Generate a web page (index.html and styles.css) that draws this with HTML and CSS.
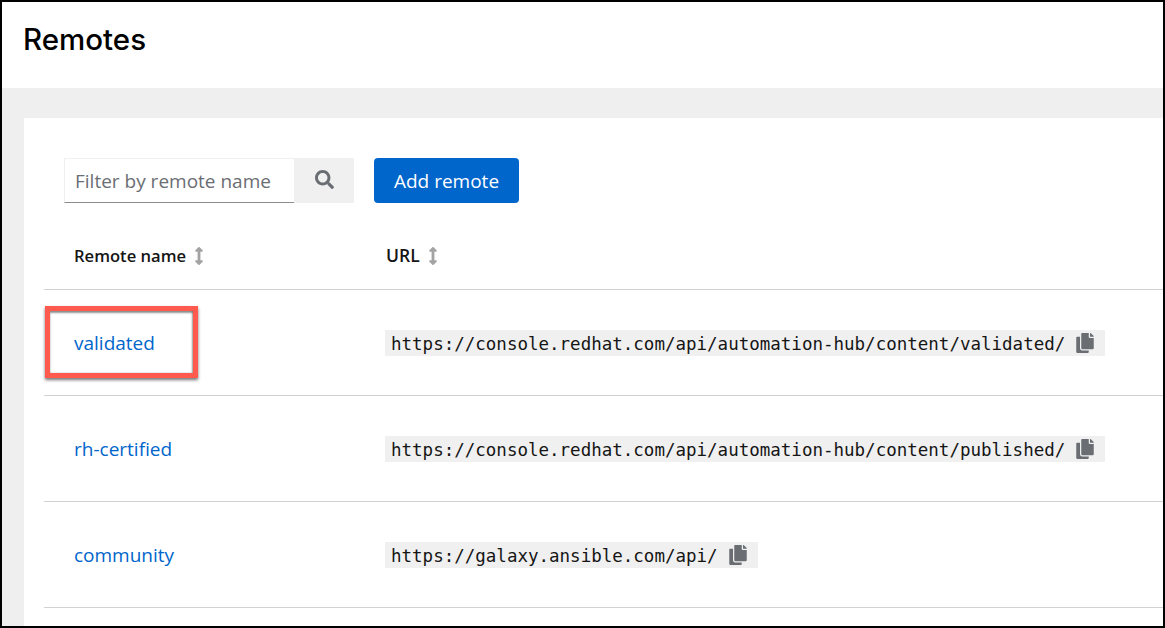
FILE: index.html
```html
<!DOCTYPE html>
<html lang="en">
<head>
    <meta charset="utf-8">
    <title>Remotes</title>
    <link rel="stylesheet" href="styles.css">
</head>
<body>
<div class="frame">
    <header class="page-header">
        <h1>Remotes</h1>
    </header>

    <main class="page-main">
        <section class="card">
            <div class="toolbar">
                <div class="filter">
                    <input class="filter-input" type="text" placeholder="Filter by remote name">
                    <button class="filter-btn" type="button" aria-label="Search">
                        <svg class="icon-search" viewBox="0 0 512 512"><path d="M505 442.7L405.3 343c-4.5-4.5-10.6-7-17-7H372c27.6-35.3 44-79.7 44-128C416 93.1 322.9 0 208 0S0 93.1 0 208s93.1 208 208 208c48.3 0 92.7-16.4 128-44v16.3c0 6.4 2.5 12.5 7 17l99.7 99.7c9.4 9.4 24.6 9.4 33.9 0l28.3-28.3c9.4-9.4 9.4-24.6.1-34zM208 336c-70.7 0-128-57.2-128-128 0-70.7 57.2-128 128-128 70.7 0 128 57.2 128 128 0 70.7-57.2 128-128 128z"/></svg>
                    </button>
                </div>
                <button class="add-btn" type="button">Add remote</button>
            </div>

            <table class="remotes">
                <thead>
                    <tr>
                        <th class="col-name">Remote name
                            <svg class="icon-sort" viewBox="0 0 256 512"><path d="M214.059 377.941H168V134.059h46.059c21.382 0 32.09-25.851 16.971-40.971L144.971 7.029c-9.373-9.373-24.569-9.373-33.941 0L24.971 93.088c-15.119 15.119-4.411 40.971 16.971 40.971H88v243.882H41.941c-21.382 0-32.09 25.851-16.971 40.971l86.059 86.059c9.373 9.373 24.569 9.373 33.941 0l86.059-86.059c15.12-15.119 4.412-40.971-16.97-40.971z"/></svg>
                        </th>
                        <th class="col-url">URL
                            <svg class="icon-sort" viewBox="0 0 256 512"><path d="M214.059 377.941H168V134.059h46.059c21.382 0 32.09-25.851 16.971-40.971L144.971 7.029c-9.373-9.373-24.569-9.373-33.941 0L24.971 93.088c-15.119 15.119-4.411 40.971 16.971 40.971H88v243.882H41.941c-21.382 0-32.09 25.851-16.971 40.971l86.059 86.059c9.373 9.373 24.569 9.373 33.941 0l86.059-86.059c15.12-15.119 4.412-40.971-16.97-40.971z"/></svg>
                        </th>
                    </tr>
                </thead>
                <tbody>
                    <tr>
                        <td class="col-name highlighted">
                            <a href="#">validated</a>
                            <span class="callout"></span>
                        </td>
                        <td class="col-url">
                            <span class="url-chip">https://console.redhat.com/api/automation-hub/content/validated/
                                <svg class="icon-copy" viewBox="0 0 448 512"><path d="M320 448v40c0 13.255-10.745 24-24 24H24c-13.255 0-24-10.745-24-24V120c0-13.255 10.745-24 24-24h72v296c0 30.879 25.121 56 56 56h168zm0-344V0H152c-13.255 0-24 10.745-24 24v368c0 13.255 10.745 24 24 24h272c13.255 0 24-10.745 24-24V128H344c-13.2 0-24-10.8-24-24zm120.971-31.029L375.029 7.029A24 24 0 0 0 358.059 0H352v96h96v-6.059a24 24 0 0 0-7.029-16.97z"/></svg>
                            </span>
                        </td>
                    </tr>
                    <tr>
                        <td class="col-name"><a href="#">rh-certified</a></td>
                        <td class="col-url">
                            <span class="url-chip">https://console.redhat.com/api/automation-hub/content/published/
                                <svg class="icon-copy" viewBox="0 0 448 512"><path d="M320 448v40c0 13.255-10.745 24-24 24H24c-13.255 0-24-10.745-24-24V120c0-13.255 10.745-24 24-24h72v296c0 30.879 25.121 56 56 56h168zm0-344V0H152c-13.255 0-24 10.745-24 24v368c0 13.255 10.745 24 24 24h272c13.255 0 24-10.745 24-24V128H344c-13.2 0-24-10.8-24-24zm120.971-31.029L375.029 7.029A24 24 0 0 0 358.059 0H352v96h96v-6.059a24 24 0 0 0-7.029-16.97z"/></svg>
                            </span>
                        </td>
                    </tr>
                    <tr>
                        <td class="col-name"><a href="#">community</a></td>
                        <td class="col-url">
                            <span class="url-chip">https://galaxy.ansible.com/api/
                                <svg class="icon-copy" viewBox="0 0 448 512"><path d="M320 448v40c0 13.255-10.745 24-24 24H24c-13.255 0-24-10.745-24-24V120c0-13.255 10.745-24 24-24h72v296c0 30.879 25.121 56 56 56h168zm0-344V0H152c-13.255 0-24 10.745-24 24v368c0 13.255 10.745 24 24 24h272c13.255 0 24-10.745 24-24V128H344c-13.2 0-24-10.8-24-24zm120.971-31.029L375.029 7.029A24 24 0 0 0 358.059 0H352v96h96v-6.059a24 24 0 0 0-7.029-16.97z"/></svg>
                            </span>
                        </td>
                    </tr>
                </tbody>
            </table>
        </section>
    </main>
</div>
</body>
</html>
```

FILE: styles.css
```css
* {
    box-sizing: border-box;
}

body {
    margin: 0;
    font-family: 'Open Sans', sans-serif;
    color: #151515;
    background: #fff;
}

.frame {
    width: 1165px;
    height: 628px;
    border: 2px solid #000;
    overflow: hidden;
    display: flex;
    flex-direction: column;
}

.page-header {
    height: 86px;
    flex: none;
    padding: 18px 0 0 21px;
    background: #fff;
}

.page-header h1 {
    margin: 0;
    font-family: 'Inter', sans-serif;
    font-size: 29.5px;
    line-height: 38px;
    font-weight: 500;
    color: #000;
}

.page-main {
    flex: 1;
    background: #efefef;
    padding: 30px 0 0 22px;
}

.card {
    height: 100%;
    background: #fff;
    padding: 40px 0 0 20px;
}

/* Toolbar */
.toolbar {
    display: flex;
    height: 45px;
    margin-left: 20px;
}

.filter {
    display: flex;
    width: 290px;
    margin-right: 20px;
}

.filter-input {
    width: 230px;
    height: 45px;
    padding: 0 0 0 10px;
    border: 1px solid #f0f0f0;
    border-bottom: 1px solid #8a8d90;
    border-right: none;
    font-family: inherit;
    font-size: 19px;
    outline: none;
}

.filter-input::placeholder {
    color: #6a6e73;
}

.filter-btn {
    width: 60px;
    height: 45px;
    padding: 0;
    border: none;
    background: #f0f0f0;
    display: flex;
    align-items: center;
    justify-content: center;
}

.icon-search {
    width: 19px;
    height: 19px;
    margin-top: -3px;
    fill: #6a6e73;
}

.add-btn {
    width: 145px;
    height: 45px;
    border: none;
    border-radius: 4px;
    background: #0066cc;
    color: #fff;
    font-family: inherit;
    font-size: 19px;
}

/* Table */
.remotes {
    width: 100%;
    border-collapse: collapse;
    table-layout: fixed;
}

.remotes th {
    height: 86px;
    padding-top: 20px;
    text-align: left;
    font-size: 16.6px;
    font-weight: 600;
    color: #151515;
    border-bottom: 1px solid #d2d2d2;
}

.remotes td {
    height: 106px;
    padding-top: 2px;
    border-bottom: 1px solid #d2d2d2;
}

.col-name {
    width: 341px;
    padding-left: 30px;
}

.remotes .col-url {
    padding-left: 0;
}

.remotes th.col-url {
    padding-left: 1px;
    font-size: 17.5px;
}

.icon-sort {
    width: 10px;
    height: 18px;
    margin-left: 4px;
    vertical-align: -3px;
    fill: #a3a3a3;
}

.remotes a {
    color: #0066cc;
    font-size: 19px;
    text-decoration: none;
}

.url-chip {
    display: inline-flex;
    align-items: center;
    gap: 12px;
    height: 26px;
    padding: 2px 10px 0 6px;
    background: #f0f0f0;
    font-family: 'DejaVu Sans Mono', monospace;
    font-size: 17.5px;
    color: #151515;
}

.icon-copy {
    width: 18px;
    height: 20px;
    margin-top: -2px;
    margin-left: -1px;
    margin-right: 1px;
    fill: #6a6e73;
}

/* Red annotation around the first remote */
.highlighted {
    position: relative;
}

.callout {
    position: absolute;
    left: 1px;
    top: 16px;
    width: 153px;
    height: 72px;
    border: 5px solid #ff5a4d;
    box-shadow: 0 2px 3px rgba(0, 0, 0, 0.55), inset 0 2px 2px rgba(0, 0, 0, 0.4), inset -1px 0 2px rgba(0, 0, 0, 0.3);
}
```
